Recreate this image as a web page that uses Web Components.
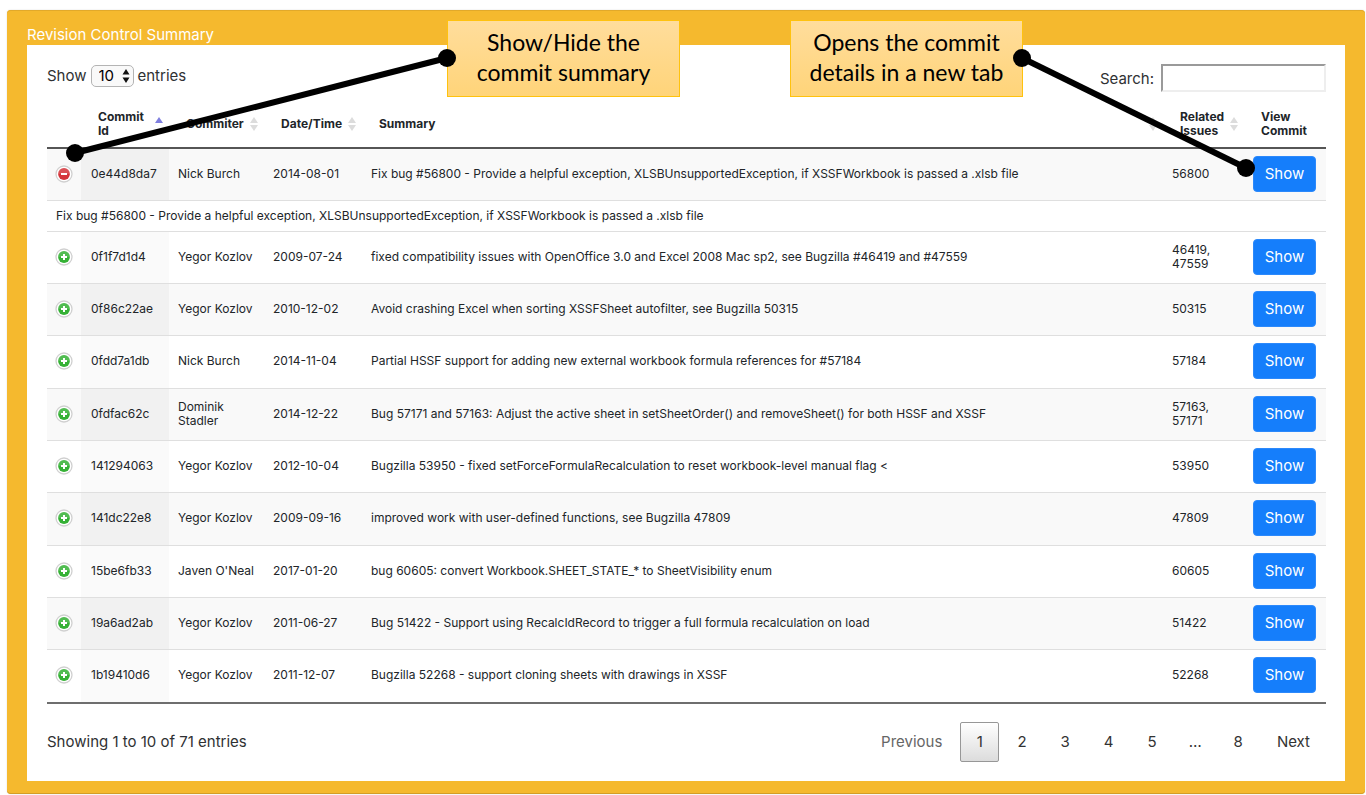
<!DOCTYPE html>
<html lang="en">
<head>
<meta charset="utf-8">
<title>Revision Control Summary</title>
<style>
body { margin: 0; padding: 10px 1px 1px 7px; background: #fff; color: #2f3133; font-family: Inter, "Liberation Sans", sans-serif; font-size: 15px; }
</style>
</head>
<body>
<revision-page></revision-page>
<script>
const define = (name, html, setup) => customElements.define(name, class extends HTMLElement {
  connectedCallback() {
    if (this.shadowRoot) return;
    const root = this.attachShadow({ mode: 'open' });
    const t = document.createElement('template');
    t.innerHTML = html;
    root.append(t.content.cloneNode(true));
    if (setup) setup(this, root);
  }
});

define('row-toggle', `
<style>
:host { display: block; width: 18px; height: 18px; }
button { display: block; width: 18px; height: 18px; padding: 0; border: 0; background: none; cursor: pointer; }
svg { display: block; }
.ring { fill: #fff; stroke: #d0d0d0; stroke-width: 1.3; }
.bar { fill: none; stroke: #fff; stroke-width: 2; }
.disc { fill: #35b135; }
.shine { fill: #fff; opacity: .14; }
:host([open]) .v { display: none; }
:host([open]) .disc { fill: #d4343a; }
</style>
<button type="button" aria-label="Toggle commit summary">
<svg width="18" height="18" viewBox="0 0 18 18"><circle class="ring" cx="9" cy="9" r="8"/><circle class="disc" cx="9" cy="9" r="5.9"/><path class="shine" d="M3.1 9A5.9 5.9 0 0 1 14.9 9Z"/><path class="bar" d="M6 9H12"/><path class="bar v" d="M9 6V12"/></svg>
</button>`, (host, root) => root.querySelector('button').onclick = () => {
  host.toggleAttribute('open');
  host.dispatchEvent(new CustomEvent('toggled', { bubbles: true }));
});

define('sort-mark', `
<style>
:host { display: block; width: 8px; height: 14px; }
svg { display: block; }
path { fill: #dcdcdc; }
:host([dir-up]) path { fill: #7f7fdf; }
:host([dir-up]) .down { display: none; }
</style>
<svg width="8" height="14" viewBox="0 0 8 14"><path d="M4 0L8 6H0Z"/><path class="down" d="M4 14L8 8H0Z"/></svg>`);

define('show-button', `
<style>
:host { display: block; }
button { display: block; box-sizing: border-box; width: 63px; height: 36px; padding: 0; border: 1px solid #2c89fb; border-radius: 4px; background: #157efb; color: #fff; font: inherit; font-size: 15px; cursor: pointer; }
</style>
<button type="button"><slot></slot></button>`);

define('entries-length', `
<style>
:host { display: block; }
label { display: flex; align-items: center; gap: 4px; line-height: 22px; }
.box { display: flex; position: relative; }
select { appearance: none; box-sizing: border-box; width: 43px; height: 22px; margin: 0; padding: 0 0 0 7px; border: 1px solid #b4b4b4; border-radius: 5px; background: #f9f9f9; color: #000; font: inherit; font-size: 15px; line-height: 18px; }
svg { position: absolute; right: 4px; top: 4px; pointer-events: none; }
</style>
<label>Show <span class="box"><select><option>10</option><option>25</option><option>50</option></select>
<svg width="8" height="14" viewBox="0 0 8 14"><path d="M4 0L7.5 5.5H0.5ZM4 14L7.5 8.5H0.5Z" fill="#111"/></svg></span> entries</label>`);

define('search-box', `
<style>
:host { display: block; }
label { display: flex; align-items: center; gap: 7px; }
input { box-sizing: border-box; width: 165px; height: 28px; margin: 0; padding: 2px 4px; border: 2px solid; border-color: #9a9a9a #eee #eee #9a9a9a; background: #fff; font: inherit; }
</style>
<label>Search: <input type="search"></label>`);

const commits = [
  ['0e44d8da7', 'Nick Burch', '2014-08-01', 'Fix bug #56800 - Provide a helpful exception, XLSBUnsupportedException, if XSSFWorkbook is passed a .xlsb file', '56800', true],
  ['0f1f7d1d4', 'Yegor Kozlov', '2009-07-24', 'fixed compatibility issues with OpenOffice 3.0 and Excel 2008 Mac sp2, see Bugzilla #46419 and #47559', '46419, 47559'],
  ['0f86c22ae', 'Yegor Kozlov', '2010-12-02', 'Avoid crashing Excel when sorting XSSFSheet autofilter, see Bugzilla 50315', '50315'],
  ['0fdd7a1db', 'Nick Burch', '2014-11-04', 'Partial HSSF support for adding new external workbook formula references for #57184', '57184'],
  ['0fdfac62c', 'Dominik Stadler', '2014-12-22', 'Bug 57171 and 57163: Adjust the active sheet in setSheetOrder() and removeSheet() for both HSSF and XSSF', '57163, 57171'],
  ['141294063', 'Yegor Kozlov', '2012-10-04', 'Bugzilla 53950 - fixed setForceFormulaRecalculation to reset workbook-level manual flag <', '53950'],
  ['141dc22e8', 'Yegor Kozlov', '2009-09-16', 'improved work with user-defined functions, see Bugzilla 47809', '47809'],
  ['15be6fb33', "Javen O'Neal", '2017-01-20', 'bug 60605: convert Workbook.SHEET_STATE_* to SheetVisibility enum', '60605'],
  ['19a6ad2ab', 'Yegor Kozlov', '2011-06-27', 'Bug 51422 - Support using RecalcIdRecord to trigger a full formula recalculation on load', '51422'],
  ['1b19410d6', 'Yegor Kozlov', '2011-12-07', 'Bugzilla 52268 - support cloning sheets with drawings in XSSF', '52268']
];

define('commit-table', `
<style>
:host { display: block; }
table { width: 100%; table-layout: fixed; border-collapse: separate; border-spacing: 0; border-bottom: 2px solid #6e6e6e; font-size: 12px; line-height: 14px; color: #212529; }
th { box-sizing: border-box; height: 51px; padding: 2px 6px 0 17px; border-bottom: 2px solid #555; text-align: left; font-weight: 700; vertical-align: middle; }
th div { display: flex; align-items: center; justify-content: space-between; }
td { box-sizing: border-box; height: 52px; padding: 0 9px 2px; border-bottom: 1px solid #dfdfdf; vertical-align: middle; }
tbody tr:nth-child(3n+2) td { height: 53px; }
tbody tr:last-child td { height: 52px; border-bottom: 0; }
tr.odd td { background: #f9f9f9; }
td.id { padding-left: 10px; background: #fafafa; }
tr.odd td.id { background: #f1f1f1; }
tbody tr.detail td { height: 31px; padding-bottom: 0; }
.c0 { width: 34px; } .c1 { width: 88px; } .c2 { width: 95px; } .c3 { width: 98px; } .c5 { width: 81px; } .c6 { width: 82px; }
td.tg { padding-left: 8px; padding-right: 8px; }
</style>
<table>
<colgroup><col class="c0"><col class="c1"><col class="c2"><col class="c3"><col><col class="c5"><col class="c6"></colgroup>
<thead><tr>
<th></th>
<th><div>Commit Id<sort-mark dir-up></sort-mark></div></th>
<th><div>Commiter<sort-mark></sort-mark></div></th>
<th><div>Date/Time<sort-mark></sort-mark></div></th>
<th><div>Summary<sort-mark></sort-mark></div></th>
<th><div>Related Issues<sort-mark></sort-mark></div></th>
<th>View Commit</th>
</tr></thead>
<tbody></tbody>
</table>`, (host, root) => {
  const body = root.querySelector('tbody');
  const cell = (tr, content, cls) => {
    const td = document.createElement('td');
    if (cls) td.className = cls;
    td.append(content);
    tr.append(td);
    return td;
  };
  commits.forEach(([id, who, date, text, issues, open], i) => {
    const tr = document.createElement('tr');
    tr.className = i % 2 ? 'even' : 'odd';
    const toggle = document.createElement('row-toggle');
    if (open) toggle.setAttribute('open', '');
    cell(tr, toggle, 'tg');
    cell(tr, id, 'id');
    cell(tr, who);
    cell(tr, date);
    cell(tr, text);
    cell(tr, issues);
    const show = document.createElement('show-button');
    show.textContent = 'Show';
    cell(tr, show);
    body.append(tr);
    const detail = document.createElement('tr');
    detail.className = 'detail';
    cell(detail, text).colSpan = 7;
    if (open) tr.after(detail);
    toggle.addEventListener('toggled', () => toggle.hasAttribute('open') ? tr.after(detail) : detail.remove());
  });
});

define('page-nav', `
<style>
:host { display: block; }
nav { display: flex; align-items: center; gap: 2px; }
button, span { box-sizing: border-box; min-width: 39px; height: 40px; padding: 0 15px; border: 1px solid transparent; border-radius: 2px; background: none; color: #333; font: inherit; line-height: 38px; cursor: pointer; }
span { padding: 0 13px; text-align: center; }
button:disabled { color: #666; cursor: default; }
button[aria-current] { border-color: #979797; background: linear-gradient(#fff, #dcdcdc); }
</style>
<nav aria-label="Pages"><button disabled>Previous</button><button aria-current="page">1</button><button>2</button><button>3</button><button>4</button><button>5</button><span>…</span><button>8</button><button>Next</button></nav>`);

define('summary-panel', `
<style>
:host { display: block; padding: 15px 20px 13px; border-radius: 4px; background: #f5b92e; box-shadow: inset 0 1px #e2a92a, inset 0 -1px #d39d27, 0 0 2px #ddd; }
h2 { margin: 0; color: #fff; font-size: 15px; font-weight: 400; line-height: 20px; }
section { padding: 19px 19px 19px 20px; background: #fff; }
</style>
<h2><slot name="title"></slot></h2>
<section><slot></slot></section>`);

define('callout-note', `
<style>
:host { display: block; box-sizing: border-box; width: 233px; height: 77px; padding-top: 6px; border: 1px solid #ffc20e; background: linear-gradient(#ffdd9c, #ffd479); color: #000; font-family: Lato, "Open Sans", sans-serif; font-size: 23px; line-height: 30px; text-align: center; }
</style>
<slot></slot>`);

define('revision-page', `
<style>
:host { display: block; position: relative; }
.tools { display: flex; justify-content: space-between; align-items: flex-start; height: 34px; }
.foot { display: flex; justify-content: space-between; align-items: center; padding-top: 18px; }
.info { padding-bottom: 2px; }
entries-length { padding-top: 1px; }
callout-note { position: absolute; top: 10px; }
.note1 { left: 440px; }
.note2 { right: 342px; }
svg { position: absolute; top: 0; pointer-events: none; }
.link1 { left: 0; } .link2 { right: 0; }
line { stroke: #000; stroke-width: 6; }
</style>
<summary-panel>
<span slot="title">Revision Control Summary</span>
<div class="tools"><entries-length></entries-length><search-box></search-box></div>
<commit-table></commit-table>
<div class="foot"><div class="info">Showing 1 to 10 of 71 entries</div><page-nav></page-nav></div>
</summary-panel>
<callout-note class="note1">Show/Hide the<br>commit summary</callout-note>
<callout-note class="note2">Opens the commit<br>details in a new tab</callout-note>
<svg class="link1" width="460" height="160" viewBox="7 10 460 160"><line x1="75" y1="153" x2="447" y2="58"/><circle cx="75" cy="153" r="9"/><circle cx="447" cy="58" r="9"/></svg>
<svg class="link2" width="358" height="180" viewBox="1007 10 358 180"><line x1="1022" y1="58" x2="1246" y2="168"/><circle cx="1022" cy="58" r="9"/><circle cx="1246" cy="168" r="9"/></svg>`);
</script>
</body>
</html>
